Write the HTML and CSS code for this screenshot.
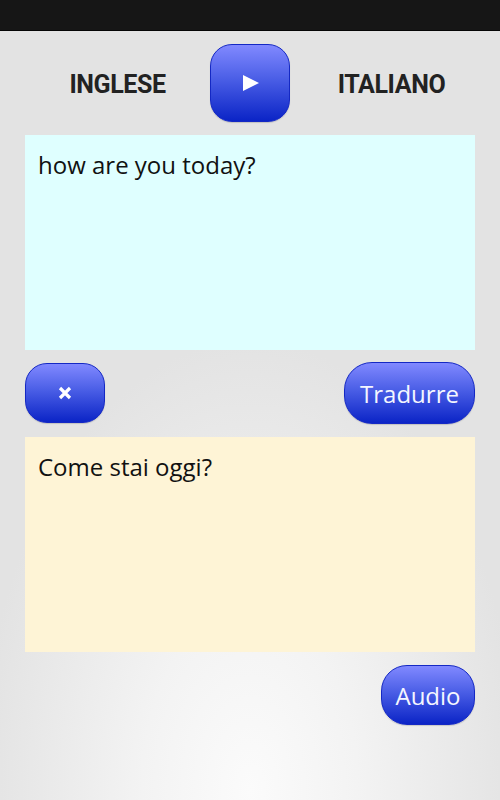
FILE: index.html
```html
<!DOCTYPE html>
<html lang="it">
<head>
  <meta charset="UTF-8">
  <meta name="viewport" content="width=device-width, initial-scale=1.0">
  <title>Traduttore</title>
  <link rel="stylesheet" href="styles.css">
</head>
<body>

<div class="status"></div>

<div class="app">
  <div class="langs">
    <div class="lang">INGLESE</div>
    <button class="btn btn-swap" aria-label="Scambia">
      <svg width="18" height="18" viewBox="0 0 18 18"><polygon points="1,1 17,9 1,17" fill="#fff"/></svg>
    </button>
    <div class="lang lang-right">ITALIANO</div>
  </div>

  <div class="box box-source">how are you today?</div>

  <div class="actions">
    <button class="btn btn-clear" aria-label="Cancella">
      <svg width="14" height="14" viewBox="0 0 14 14"><path d="M2 2 L12 12 M12 2 L2 12" stroke="#fff" stroke-width="3.2"/></svg>
    </button>
    <button class="btn btn-text btn-translate">Tradurre</button>
  </div>

  <div class="box box-target">Come stai oggi?</div>

  <div class="audio-row">
    <button class="btn btn-text btn-audio">Audio</button>
  </div>
</div>

</body>
</html>
```

FILE: styles.css
```css
html, body {
  height: 100%;
}

body {
  margin: 0;
  font-family: Roboto, "Noto Sans", sans-serif;
  background: radial-gradient(ellipse 270px 450px at 250px 790px, #fbfbfb 0%, #f3f3f3 40%, #e3e3e3 100%);
  background-color: #e3e3e3;
  overflow: hidden;
}

.status {
  height: 30px;
  background: #161616;
  border-bottom: 1px solid #050505;
}

.app {
  padding: 0 25px;
}

.langs {
  display: grid;
  grid-template-columns: 185px 80px 185px;
  align-items: center;
  margin-top: 13px;
}

.lang {
  text-align: center;
  font-size: 25px;
  font-weight: bold;
  color: #222;
  letter-spacing: -0.4px;
  padding-top: 2px;
}

.lang-right {
  padding-left: 18px;
}

.btn {
  border: 1px solid #1428c4;
  background: linear-gradient(to bottom, #8189ff 0%, #4a5ee6 45%, #0b24c6 100%);
  color: #f4f6ff;
  font-family: inherit;
  border-radius: 22px;
  padding: 0;
  display: flex;
  align-items: center;
  justify-content: center;
  cursor: pointer;
  box-shadow: 0 1px 1px rgba(0, 0, 0, 0.15);
}

.btn-swap {
  width: 80px;
  height: 78px;
}

.btn-swap svg {
  margin-left: 2px;
}

.box {
  height: 215px;
  box-sizing: border-box;
  padding: 13px 13px;
  font-family: "Open Sans", Roboto, sans-serif;
  font-size: 24px;
  color: #111;
}

.box-source {
  margin-top: 13px;
  background: #dfffff;
}

.box-target {
  margin-top: 13px;
  background: #fef4d6;
}

.actions {
  display: flex;
  justify-content: space-between;
  align-items: center;
  margin-top: 12px;
  height: 62px;
}

.btn-clear {
  width: 80px;
  height: 60px;
}

.btn-text {
  font-family: "Open Sans", Roboto, sans-serif;
  font-size: 24px;
}

.btn-translate {
  width: 131px;
  height: 62px;
  border-radius: 28px;
}

.audio-row {
  display: flex;
  justify-content: flex-end;
  margin-top: 13px;
}

.btn-audio {
  width: 94px;
  height: 60px;
  border-radius: 26px;
}
```
